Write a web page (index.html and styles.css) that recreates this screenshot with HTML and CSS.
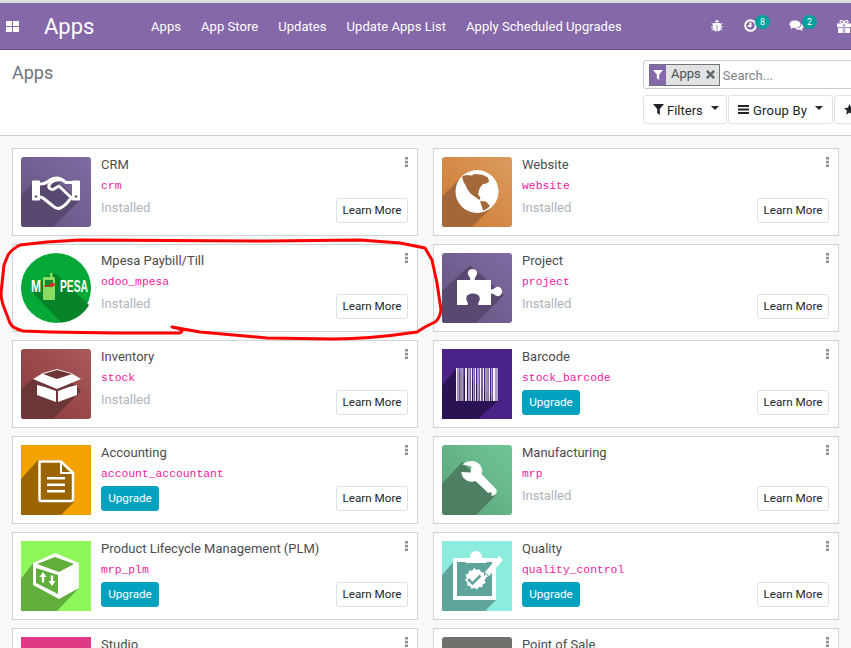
FILE: index.html
```html
<!DOCTYPE html>
<html lang="en">
<head>
  <meta charset="UTF-8" />
  <title>Apps</title>
  <link rel="stylesheet" href="styles.css">
</head>
<body>
  <header class="navbar">
    <svg class="apps-toggle" viewBox="0 0 13 11"><path d="M0 0h6v5H0zM7 0h6v5H7zM0 6h6v5H0zM7 6h6v5H7z"/></svg>
    <a class="brand">Apps</a>
    <nav class="menu">
      <a>Apps</a>
      <a>App Store</a>
      <a>Updates</a>
      <a>Update Apps List</a>
      <a>Apply Scheduled Upgrades</a>
    </nav>
    <div class="systray">
      <svg class="tray-bug" viewBox="0 0 12 12"><path d="M4 2.200a2 2 0 0 1 4 0zM3.200 3h5.600l.8 1 1.400-1.200.5.6L10 5v1.500h2v1h-2v1l1.600 1.500-.6.6L9.500 9.200C9 10.500 8 11.500 6.400 11.500V5h-.8v6.500C4 11.500 3 10.500 2.500 9.200L1 10.600l-.6-.6L2 8.500v-1H0v-1h2V5L.5 3.400l.5-.6L2.400 4z"/></svg>
      <span class="tray-item tray-clock">
        <svg viewBox="0 0 13 13"><circle cx="6.500" cy="6.500" r="5.300" class="ring"/><path d="M6.500 3.500v3.500H4" class="hand"/></svg>
        <b class="count">8</b>
      </span>
      <span class="tray-item tray-chat">
        <svg viewBox="0 0 15 13"><path d="M6 1c3 0 5.500 1.600 5.500 3.700S9 8.400 6 8.400c-.7 0-1.300 0-1.900-.2L1.500 9.500l.7-2C1 6.800.5 5.800.5 4.700.5 2.600 3 1 6 1z"/><path d="M12.500 4.500c1.300.6 2 1.500 2 2.600 0 1-.6 1.800-1.500 2.400l.6 2-2.500-1.400c-2 .4-4 0-5-1.200 3.500.2 6.600-1.700 6.400-4.400z"/></svg>
        <b class="count">2</b>
      </span>
      <svg class="tray-gift" viewBox="0 0 14 13"><path d="M0 3.500h5.800V7H0zM8.200 3.500H14V7H8.200zM1 7.800h4.800V13H1zM8.200 7.800H13V13H8.200zM6.500 3.500h1V13h-1z"/><path d="M7 3.300C5 3.300 3 3 3 1.700 3 .5 4.500 0 5.500.6 6.300 1 7 2.300 7 3.300c0-1 .7-2.300 1.500-2.700C9.500 0 11 .5 11 1.700c0 1.300-2 1.600-4 1.600z" class="bow"/></svg>
    </div>
  </header>

  <section class="control-panel">
    <h1 class="breadcrumb">Apps</h1>
    <div class="panel-right">
      <div class="searchbox">
        <span class="facet">
          <span class="facet-icon"><svg viewBox="0 0 11 11"><path d="M0 0h11L6.800 5v6L4.200 9V5z"/></svg></span>
          <span class="facet-label">Apps</span>
          <svg class="facet-close" viewBox="0 0 9 9"><path d="M1.700 0 4.500 2.800 7.300 0 9 1.700 6.200 4.500 9 7.300 7.300 9 4.500 6.200 1.700 9 0 7.300 2.800 4.500 0 1.700z"/></svg>
        </span>
        <input class="search-input" placeholder="Search...">
      </div>
      <div class="search-buttons">
        <button class="tool-btn btn-filters"><svg viewBox="0 0 11 11"><path d="M0 0h11L6.800 5v6L4.200 9V5z"/></svg><span>Filters</span><i class="caret"></i></button>
        <button class="tool-btn btn-group"><svg viewBox="0 0 11 9"><path d="M0 0h11v2H0zM0 3.500h11v2H0zM0 7h11v2H0z"/></svg><span>Group By</span><i class="caret"></i></button>
        <button class="tool-btn btn-fav"><svg viewBox="0 0 12 12"><path d="M6 0l1.800 4 4.200.4-3.200 2.900.9 4.300L6 9.400l-3.700 2.200.9-4.300L0 4.400 4.200 4z"/></svg></button>
      </div>
    </div>
  </section>

  <main class="kanban">

    <article class="card">
      <svg class="icon rounded" viewBox="0 0 70 70">
        <defs><linearGradient id="gCrm" x1="0" y1="1" x2="1" y2="0"><stop offset="0" stop-color="#62537f"/><stop offset="1" stop-color="#7f6ca3"/></linearGradient></defs>
        <rect width="70" height="70" fill="url(#gCrm)"/>
        <path d="M0 38 12 26 34 22 58 44 32 70H0z" fill="#57496f"/>
        <path d="M11 24.500q0-1 1-1h6q1 0 1 1v18q0 1-1 1h-6q-1 0-1-1zM51 24.500q0-1 1-1h6q1 0 1 1v18q0 1-1 1h-6q-1 0-1-1z" fill="#fff"/>
        <circle cx="15" cy="39.500" r="1.300" fill="#62537f"/>
        <circle cx="55" cy="39.500" r="1.300" fill="#62537f"/>
        <path d="M19 27C24 27 27 25 30 22.500C33 20.500 38 20.500 41 22.500L45 25.500H51M19 40L22 41L32 49C34 51 37 52 39.500 51C42 50 44.500 47.500 46 46L51 40" fill="none" stroke="#fff" stroke-width="3" stroke-linecap="round" stroke-linejoin="round"/>
        <path d="M41 23C36 22 30 24 28 28C27 31 30 33.500 33 32L38 29L49 39.500" fill="none" stroke="#fff" stroke-width="3" stroke-linecap="round" stroke-linejoin="round"/>
      </svg>
      <div class="card-body">
        <div class="name">CRM</div>
        <code class="tech">crm</code>
        <div class="card-foot"><span class="installed">Installed</span><a class="btn-learn">Learn More</a></div>
      </div>
      <svg class="kebab" viewBox="0 0 3 10"><path d="M0 0h3v2.500H0zM0 3.700h3v2.500H0zM0 7.400h3V10H0z"/></svg>
    </article>

    <article class="card">
      <svg class="icon rounded" viewBox="0 0 70 70">
        <defs><linearGradient id="gWeb" x1="0" y1="1" x2="1" y2="0"><stop offset="0" stop-color="#cc7a30"/><stop offset="1" stop-color="#dd9b60"/></linearGradient></defs>
        <rect width="70" height="70" fill="url(#gWeb)"/>
        <path d="M0 40 20 19 50 50 30 70H0z" fill="#a3673a"/>
        <circle cx="35" cy="34.500" r="21.500" fill="#fff"/>
        <path d="M20 19.500 24 18 30 18.500 32 17 38 17.500 41 18 46 20.500 47 24.500 44.500 26.500 41 27 38.500 30 37 33 36 37.500 38.500 40.500 37.500 43 34 40.500 29 37 25.500 32.500 23.500 28 21.500 25z" fill="#a3693b"/>
        <path d="M38 44 44 44.500 48 49 44 52.500 41 53.500 40 50z" fill="#a3693b"/>
      </svg>
      <div class="card-body">
        <div class="name">Website</div>
        <code class="tech">website</code>
        <div class="card-foot"><span class="installed">Installed</span><a class="btn-learn">Learn More</a></div>
      </div>
      <svg class="kebab" viewBox="0 0 3 10"><path d="M0 0h3v2.500H0zM0 3.700h3v2.500H0zM0 7.400h3V10H0z"/></svg>
    </article>

    <article class="card">
      <svg class="icon" viewBox="0 0 70 70">
        <circle cx="35" cy="35" r="35" fill="#06a838"/>
        <path d="M10 38 24 24 34 20 68 52A35 35 0 0 1 40 69.600z" fill="#078429"/>
        <rect x="22" y="24" width="12" height="23" rx="1.500" fill="#8bdd62"/>
        <rect x="29" y="20" width="2.500" height="5" fill="#8bdd62"/>
        <rect x="24" y="27" width="8" height="7" fill="#0a8c2c"/>
        <path d="M23 33c3-.5 5-1 7-2l-.5-2 6 2.500-6 3 .3-1.700c-2 .8-4 1.200-6.800 1.200z" fill="#e8262a"/>
        <text class="mpesa-text" x="10" y="38.500" textLength="10" lengthAdjust="spacingAndGlyphs">M</text>
        <text class="mpesa-text" x="39" y="38.500" textLength="28" lengthAdjust="spacingAndGlyphs">PESA</text>
      </svg>
      <div class="card-body">
        <div class="name">Mpesa Paybill/Till</div>
        <code class="tech">odoo_mpesa</code>
        <div class="card-foot"><span class="installed">Installed</span><a class="btn-learn">Learn More</a></div>
      </div>
      <svg class="kebab" viewBox="0 0 3 10"><path d="M0 0h3v2.500H0zM0 3.700h3v2.500H0zM0 7.400h3V10H0z"/></svg>
    </article>

    <article class="card">
      <svg class="icon rounded" viewBox="0 0 70 70">
        <defs><linearGradient id="gPrj" x1="0" y1="1" x2="1" y2="0"><stop offset="0" stop-color="#62537f"/><stop offset="1" stop-color="#7f6ca3"/></linearGradient></defs>
        <rect width="70" height="70" fill="url(#gPrj)"/>
        <path d="M0 38 28 12 62 42 34 70H0z" fill="#57496f"/>
        <path d="M15 27h12.500c1.500 0 1-1.500 0-3-1.500-2-2-3.500-1.500-5 .6-2 2.500-3 4.500-3s4 1 4.500 3c.5 1.500 0 3-1.500 5-1 1.500-1.500 3 0 3H49v8.500c0 1.500 1.500 1 3 0 2-1.500 3.500-2 5-1.500 2 .6 3 2.500 3 4.500s-1 4-3 4.500c-1.500.5-3 0-5-1.500-1.500-1-3-1.500-3 0V52H37c-1.500 0-1-1.500-.2-3 1-2 1.200-3.500.7-5-.6-2-3.500-3.500-6.500-3.500s-6 1.500-6.500 3.500c-.5 1.500 0 3 .8 5 .7 1.500 1.200 3-.3 3H15z" fill="#fff"/>
      </svg>
      <div class="card-body">
        <div class="name">Project</div>
        <code class="tech">project</code>
        <div class="card-foot"><span class="installed">Installed</span><a class="btn-learn">Learn More</a></div>
      </div>
      <svg class="kebab" viewBox="0 0 3 10"><path d="M0 0h3v2.500H0zM0 3.700h3v2.500H0zM0 7.400h3V10H0z"/></svg>
    </article>

    <article class="card">
      <svg class="icon rounded" viewBox="0 0 70 70">
        <defs><linearGradient id="gInv" x1="0" y1="1" x2="1" y2="0"><stop offset="0" stop-color="#883838"/><stop offset="1" stop-color="#aa5a5a"/></linearGradient></defs>
        <rect width="70" height="70" fill="url(#gInv)"/>
        <path d="M0 40 12 30 36 20 60 42 32 70H0z" fill="#6d3636"/>
        <path d="M12 30 22 24 36 20 50 24 60 30 48 35 36 40 24 35z" fill="#fff"/>
        <path d="M22 25 36 21 51 25 36 30z" fill="#6d3636"/>
        <path d="M16 36 24 38 35 42V53L16 46zM56 36 48 38 37 42V53L56 46z" fill="#fff"/>
      </svg>
      <div class="card-body">
        <div class="name">Inventory</div>
        <code class="tech">stock</code>
        <div class="card-foot"><span class="installed">Installed</span><a class="btn-learn">Learn More</a></div>
      </div>
      <svg class="kebab" viewBox="0 0 3 10"><path d="M0 0h3v2.500H0zM0 3.700h3v2.500H0zM0 7.400h3V10H0z"/></svg>
    </article>

    <article class="card">
      <svg class="icon" viewBox="0 0 70 70">
        <rect width="70" height="70" fill="#4a2288"/>
        <path d="M0 37 14 20 56 52 36 70H0z" fill="#2a1352"/>
        <path d="M14 19h1.500v33H14zM18.500 19h1v33h-1zM23 19h2v33h-2zM29 19h1v33h-1zM33 19h1v33h-1zM38 19h1v33h-1zM41 19h1v33h-1zM44.500 19h1v33h-1zM47 19h1v33h-1zM51 19h2v33h-2z" fill="#f4f2f8"/>
        <path d="M15.500 19h2v33h-2zM20 19h1.500v33H20zM26 19h2.500v33H26zM31 19h1.500v33H31zM35 19h2.500v33H35zM39.500 19h1v33h-1zM43 19h1v33h-1zM46 19h.7v33H46zM49 19h1.500v33H49zM53 19h3v33h-3z" fill="#a99cc4"/>
      </svg>
      <div class="card-body">
        <div class="name">Barcode</div>
        <code class="tech">stock_barcode</code>
        <div class="card-foot"><a class="btn-upgrade">Upgrade</a><a class="btn-learn">Learn More</a></div>
      </div>
      <svg class="kebab" viewBox="0 0 3 10"><path d="M0 0h3v2.500H0zM0 3.700h3v2.500H0zM0 7.400h3V10H0z"/></svg>
    </article>

    <article class="card">
      <svg class="icon" viewBox="0 0 70 70">
        <rect width="70" height="70" fill="#f4a200"/>
        <path d="M0 34 17 15H40L53 28V57L40 70H0z" fill="#9a6500"/>
        <path d="M18.500 16.500H40L52 28V54C52 55.500 51 56 50 56H20C19 56 18.500 55.500 18.500 54z" fill="none" stroke="#fff" stroke-width="2.500" stroke-linejoin="round"/>
        <path d="M40 16.500V28H52" fill="none" stroke="#fff" stroke-width="2"/>
        <path d="M26 32h18v2.500H26zM26 38.500h18V41H26zM26 45h18v2.500H26z" fill="#fff"/>
      </svg>
      <div class="card-body">
        <div class="name">Accounting</div>
        <code class="tech">account_accountant</code>
        <div class="card-foot"><a class="btn-upgrade">Upgrade</a><a class="btn-learn">Learn More</a></div>
      </div>
      <svg class="kebab" viewBox="0 0 3 10"><path d="M0 0h3v2.500H0zM0 3.700h3v2.500H0zM0 7.400h3V10H0z"/></svg>
    </article>

    <article class="card">
      <svg class="icon rounded" viewBox="0 0 70 70">
        <defs><linearGradient id="gMrp" x1="0" y1="1" x2="1" y2="0"><stop offset="0" stop-color="#5a9f78"/><stop offset="1" stop-color="#70c796"/></linearGradient></defs>
        <rect width="70" height="70" fill="url(#gMrp)"/>
        <path d="M0 39 20 17 54 50 34 70H0z" fill="#4e7f62"/>
        <path d="M30 16c4 0 9 3 10 8 .5 2 .3 3.500-.5 5l14 14.500c1.500 1.500 1.800 3.500.3 5.500-1.800 2-4 2.300-6 .5L33.500 36c-2 .8-4 1-6 .5-5-1.300-8-5-8-9.500l9 .5 1-6-9-2c2-2.500 6.500-3.500 9.500-3.500z" fill="#fff"/>
        <circle cx="48" cy="49" r="1.800" fill="#4e7f62"/>
      </svg>
      <div class="card-body">
        <div class="name">Manufacturing</div>
        <code class="tech">mrp</code>
        <div class="card-foot"><span class="installed">Installed</span><a class="btn-learn">Learn More</a></div>
      </div>
      <svg class="kebab" viewBox="0 0 3 10"><path d="M0 0h3v2.500H0zM0 3.700h3v2.500H0zM0 7.400h3V10H0z"/></svg>
    </article>

    <article class="card">
      <svg class="icon" viewBox="0 0 70 70">
        <rect width="70" height="70" fill="#8ef75a"/>
        <path d="M0 38 12 22 34 12 58 30V47L36 70H0z" fill="#62ae3d"/>
        <path d="M34 12 58 22V47L38 58 12 44V22z" fill="#fff"/>
        <path d="M16 23 34 16 53 23 38 31z" fill="#62ae3d"/>
        <path d="M15 27 37 34V53L15 42z" fill="#62ae3d"/>
        <path d="M22 31 25.500 36H23.200V41.500H20.800V36H18.500zM31 45 34.500 40H32.200V34.500H29.800V40H27.500z" fill="#fff"/>
      </svg>
      <div class="card-body">
        <div class="name">Product Lifecycle Management (PLM)</div>
        <code class="tech">mrp_plm</code>
        <div class="card-foot"><a class="btn-upgrade">Upgrade</a><a class="btn-learn">Learn More</a></div>
      </div>
      <svg class="kebab" viewBox="0 0 3 10"><path d="M0 0h3v2.500H0zM0 3.700h3v2.500H0zM0 7.400h3V10H0z"/></svg>
    </article>

    <article class="card">
      <svg class="icon" viewBox="0 0 70 70">
        <rect width="70" height="70" fill="#8cecdd"/>
        <path d="M0 34 13 19H52L54 59 43 70H0z" fill="#5fa59b"/>
        <path d="M13 19H52V57H13z" fill="none" stroke="#fff" stroke-width="4"/>
        <path d="M23 22C25 20 27 19 28 17 28 13 30 10 34 10S40 13 40 17C41 19 44 20 45 22z" fill="#fff"/>
        <path d="M32 27l2.500 2 3-.8 1.500 2.700 3 .5-.2 3.100 2.400 2-1.700 2.600 1.100 2.900-2.800 1.300-.7 3-3.100-.2-2 2.400-2.600-1.700-2.900 1.100-1.300-2.800-3-.7.200-3.100-2.400-2 1.700-2.600-1.100-2.900 2.800-1.300.7-3 3.100.2z" fill="#fff"/>
        <path d="M26 38l4.500 4.500 8-8" fill="none" stroke="#5fa59b" stroke-width="2.500"/>
        <path d="M43 31 57 15 61 19 47 35z" fill="#fff"/>
        <path d="M43.500 32.500 41 38 46 35.500z" fill="#fff"/>
      </svg>
      <div class="card-body">
        <div class="name">Quality</div>
        <code class="tech">quality_control</code>
        <div class="card-foot"><a class="btn-upgrade">Upgrade</a><a class="btn-learn">Learn More</a></div>
      </div>
      <svg class="kebab" viewBox="0 0 3 10"><path d="M0 0h3v2.500H0zM0 3.700h3v2.500H0zM0 7.400h3V10H0z"/></svg>
    </article>

    <article class="card">
      <svg class="icon" viewBox="0 0 70 70"><rect width="70" height="70" fill="#e03a84"/></svg>
      <div class="card-body">
        <div class="name">Studio</div>
      </div>
      <svg class="kebab" viewBox="0 0 3 10"><path d="M0 0h3v2.500H0zM0 3.700h3v2.500H0zM0 7.400h3V10H0z"/></svg>
    </article>

    <article class="card">
      <svg class="icon rounded" viewBox="0 0 70 70"><rect width="70" height="70" fill="#6f716c"/></svg>
      <div class="card-body">
        <div class="name">Point of Sale</div>
      </div>
      <svg class="kebab" viewBox="0 0 3 10"><path d="M0 0h3v2.500H0zM0 3.700h3v2.500H0zM0 7.400h3V10H0z"/></svg>
    </article>

  </main>

  <!-- red marker ring someone drew round the Mpesa card -->
  <svg class="marker" viewBox="0 0 851 648">
    <path d="M172 327C182 329 184 331 180 333L117 333 50 332 23 331C15 329 12 327 10 323L5 310C2 303 1 298 1 293L4 265 8 255C12 249 16 247 20 245L47 242 80 240 267 241 360 240 400 243 425 248 432 260 437 283 441 310C440 316 438 320 435 322L425 327 417 332C390 336 360 339 333 339L267 338 200 332z"/>
  </svg>
</body>
</html>
```

FILE: styles.css
```css
body {
  margin: 0;
  height: 645px;
  overflow: hidden;
  position: relative;
  border-top: 3px solid #dedede;
  background-color: #f9f9f9;
  font-family: Roboto, sans-serif;
  font-size: 13px;
  color: #212529;
}

a {
  cursor: pointer;
}

/* top bar */
.navbar {
  display: flex;
  align-items: center;
  height: 46px;
  background-color: #8568aa;
  border-bottom: 1px solid #6b4f92;
  color: #fff;
}

.apps-toggle {
  width: 13px;
  height: 11px;
  margin-left: 6px;
  fill: #fff;
}

.brand {
  margin-left: 25px;
  width: 107px;
  font-size: 22px;
}

.menu {
  display: flex;
  gap: 20px;
  width: 560px;
  letter-spacing: 0.05px;
}

.systray {
  display: flex;
  align-items: center;
  flex: none;
}

.tray-bug {
  width: 12px;
  height: 12px;
  fill: #fff;
}

.tray-item {
  position: relative;
  display: block;
  height: 14px;
}

.tray-item svg {
  display: block;
  fill: #fff;
}

.tray-clock {
  margin-left: 21px;
}

.tray-clock svg {
  width: 13px;
  height: 13px;
}

.ring, .hand {
  fill: none;
  stroke: #fff;
  stroke-width: 2;
}

.tray-chat {
  margin-left: 32px;
}

.tray-chat svg {
  width: 15px;
  height: 14px;
}

.count {
  position: absolute;
  top: -4px;
  left: 11px;
  width: 15px;
  height: 14px;
  border-radius: 7px;
  background-color: #00a09d;
  font-size: 9px;
  font-weight: 400;
  line-height: 14px;
  text-align: center;
}

.tray-chat .count {
  left: 13px;
}

.tray-gift {
  flex: none;
  width: 14px;
  height: 13px;
  margin-left: 33px;
  fill: #fff;
}

.bow {
  fill: none;
  stroke: #fff;
  stroke-width: 1.200;
}

/* control panel */
.control-panel {
  display: flex;
  height: 85px;
  background-color: #fff;
  border-bottom: 1px solid #ccc;
}

.breadcrumb {
  width: 619px;
  margin: 0 12px 0 0;
  padding: 12px 0 0 12px;
  flex: none;
  font-size: 18px;
  font-weight: 400;
  line-height: 22px;
  color: #6c757d;
}

.panel-right {
  flex: none;
  width: 330px;
  padding-top: 10px;
}

.searchbox {
  display: flex;
  align-items: center;
  box-sizing: border-box;
  height: 29px;
  padding-left: 5px;
  border: 1px solid #ccc;
  border-radius: 3px;
}

.facet {
  display: flex;
  align-items: center;
  box-sizing: border-box;
  height: 22px;
  border: 1px solid #6c757d;
  background-color: #e2e2e0;
  color: #495057;
}

.facet-icon {
  display: flex;
  align-items: center;
  justify-content: center;
  width: 16px;
  height: 20px;
  background-color: #8568aa;
}

.facet-icon svg {
  width: 10px;
  height: 10px;
  fill: #fff;
}

.facet-label {
  margin-left: 5px;
  line-height: 18px;
  margin-top: -2px;
}

.facet-close {
  width: 9px;
  height: 9px;
  margin: 0 4px 0 5px;
  fill: #5f666d;
}

.search-input {
  width: 200px;
  margin: 2px 0 0 3px;
  padding: 0;
  border: 0;
  outline: 0;
  font-family: Roboto, sans-serif;
  font-size: 13px;
}

.search-input::placeholder {
  color: #7b838a;
}

.search-buttons {
  display: flex;
  gap: 1px;
  margin-top: 6px;
}

.tool-btn {
  display: flex;
  align-items: center;
  flex: none;
  box-sizing: border-box;
  height: 29px;
  padding: 0 0 0 9px;
  background-color: #fff;
  border: 1px solid #dee2e6;
  border-radius: 3px;
  font-family: Roboto, sans-serif;
  font-size: 13px;
  color: #212529;
}

.tool-btn span {
  margin-top: 2px;
}

.tool-btn svg {
  width: 11px;
  height: 11px;
  margin-right: 3px;
  fill: #212529;
}

.btn-filters {
  width: 84px;
}

.btn-group {
  width: 105px;
}

.btn-group span {
  letter-spacing: 0.2px;
}

.btn-group svg {
  margin-right: 4px;
  height: 9px;
}

.btn-fav {
  width: 100px;
}

.caret {
  width: 0;
  height: 0;
  margin: -3px 0 0 8px;
  border-top: 4px solid #212529;
  border-left: 4px solid transparent;
  border-right: 4px solid transparent;
}

/* app cards */
.kanban {
  display: grid;
  grid-template-columns: 406px 406px;
  grid-auto-rows: 88px;
  gap: 8px 15px;
  padding: 12px 0 0 12px;
}

.card {
  position: relative;
  display: flex;
  box-sizing: border-box;
  padding: 8px 9px 8px 8px;
  background-color: #fff;
  border: 1px solid #ced4da;
}

.icon {
  flex: none;
  width: 70px;
  height: 70px;
}

.icon.rounded {
  border-radius: 3px;
}

.mpesa-text {
  font-family: "Liberation Sans", sans-serif;
  font-size: 17px;
  font-weight: 700;
  fill: #fff;
}

.card-body {
  display: flex;
  flex-direction: column;
  flex: 1;
  margin-left: 10px;
}

.name {
  height: 15px;
  line-height: 15px;
  color: #4c4c4c;
}

.tech {
  height: 15px;
  margin-top: 7px;
  font-family: "Liberation Mono", monospace;
  font-size: 11.375px;
  line-height: 15px;
  color: #f0209f;
}

.card-foot {
  display: flex;
  justify-content: space-between;
  margin-top: 4px;
}

.installed {
  line-height: 20px;
  color: #adb5bd;
}

.btn-learn, .btn-upgrade {
  box-sizing: border-box;
  height: 25px;
  border-radius: 3px;
  font-size: 11.700px;
  line-height: 23px;
  text-align: center;
}

.btn-learn {
  width: 72px;
  background-color: #fff;
  border: 1px solid #dee2e6;
  color: #212529;
}

.btn-upgrade {
  width: 58px;
  background-color: #00a2bf;
  border: 1px solid #00a2bf;
  color: #fff;
}

.kebab {
  position: absolute;
  top: 8px;
  right: 9px;
  width: 3px;
  height: 10px;
  fill: #8f8f8f;
}

/* annotation over the screenshot */
.marker {
  position: absolute;
  top: -3px;
  left: 0;
  width: 851px;
  height: 648px;
  fill: none;
  stroke: #f00;
  stroke-width: 3;
  stroke-linejoin: round;
  pointer-events: none;
}
```
